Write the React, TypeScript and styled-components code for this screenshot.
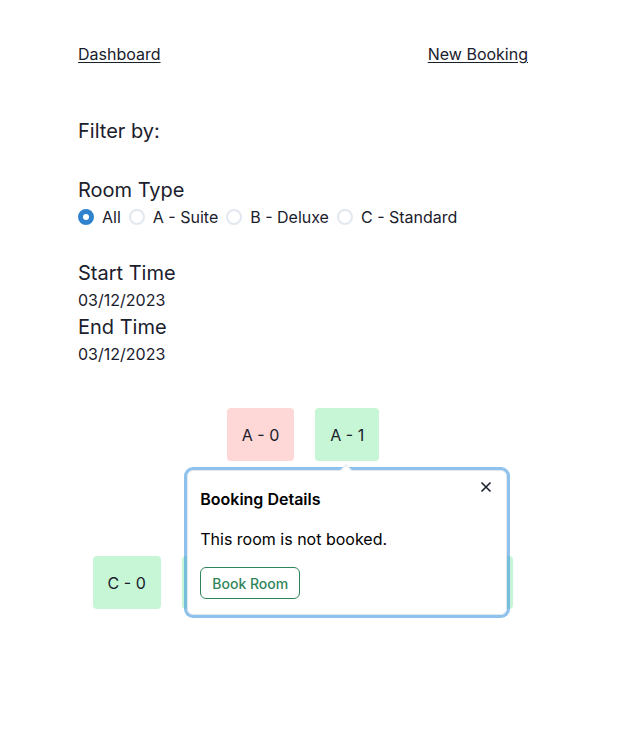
import React from "react";
import styled, { createGlobalStyle } from "styled-components";

const Global = createGlobalStyle`
  html, body { margin: 0; padding: 0; background: #ffffff; }
  body { font-family: Inter, "Noto Sans", sans-serif; color: #1a202c; }
  * { box-sizing: border-box; }
`;

const Page = styled.div`
  width: 450px;
  margin-left: 78px;
  padding-top: 42px;
  padding-bottom: 120px;
`;

const Nav = styled.nav`
  display: flex;
  justify-content: space-between;
`;

const NavLink = styled.a`
  font-size: 16px;
  line-height: 24px;
  color: #1a202c;
  text-decoration: underline;
  text-underline-offset: 2px;
  cursor: pointer;
`;

const Heading = styled.div<{ $mt?: number }>`
  font-size: 20px;
  line-height: 30px;
  margin-top: ${(p) => p.$mt ?? 0}px;
`;

const Value = styled.div`
  font-size: 16px;
  line-height: 24px;
`;

const RadioGroup = styled.div`
  display: flex;
  align-items: center;
  gap: 8px;
`;

const RadioLabel = styled.label`
  display: flex;
  align-items: center;
  gap: 8px;
  font-size: 16px;
  line-height: 24px;
  cursor: pointer;
`;

const RadioCircle = styled.span<{ $checked?: boolean }>`
  width: 16px;
  height: 16px;
  border-radius: 50%;
  border: 2px solid ${(p) => (p.$checked ? "#3182ce" : "#e2e8f0")};
  background: ${(p) => (p.$checked ? "#3182ce" : "#ffffff")};
  display: flex;
  align-items: center;
  justify-content: center;
  &::after {
    content: "";
    display: ${(p) => (p.$checked ? "block" : "none")};
    width: 6px;
    height: 6px;
    border-radius: 50%;
    background: #ffffff;
  }
`;

const Rooms = styled.div`
  margin-top: 42px;
  display: flex;
  flex-direction: column;
  gap: 95px;
`;

const RoomRow = styled.div`
  display: flex;
  justify-content: center;
  gap: 21px;
`;

const RoomWrap = styled.div`
  position: relative;
`;

const RoomBox = styled.div<{ $booked?: boolean }>`
  background: ${(p) => (p.$booked ? "#fed7d7" : "#c6f6d5")};
  border-radius: 4px;
  padding: 14.5px 15px;
  font-size: 16px;
  line-height: 24px;
  color: #1a202c;
  cursor: pointer;
`;

const Popover = styled.div`
  position: absolute;
  top: calc(100% + 9px);
  left: 50%;
  transform: translateX(-50%);
  width: 320px;
  background: #ffffff;
  border: 1px solid #e2e8f0;
  border-radius: 6px;
  box-shadow: 0 0 0 3px rgba(66, 153, 225, 0.6);
  padding: 16px 12px 15px;
  z-index: 10;
`;

const Arrow = styled.div`
  position: absolute;
  top: -5px;
  left: 50%;
  width: 8px;
  height: 8px;
  margin-left: -5px;
  background: #ffffff;
  border-top: 1px solid #e2e8f0;
  border-left: 1px solid #e2e8f0;
  transform: rotate(45deg);
  z-index: 11;
`;

const CloseButton = styled.button`
  position: absolute;
  top: 4px;
  right: 8px;
  width: 24px;
  height: 24px;
  border: none;
  background: transparent;
  padding: 0;
  display: flex;
  align-items: center;
  justify-content: center;
  cursor: pointer;
  color: #1a202c;
`;

const PopHeader = styled.div`
  font-size: 16px;
  line-height: 24px;
  font-weight: 600;
  color: #000000;
`;

const PopBody = styled.div`
  margin-top: 16px;
  font-size: 16px;
  line-height: 24px;
  color: #000000;
`;

const BookButton = styled.button`
  margin-top: 16px;
  height: 32px;
  width: 100px;
  padding: 0;
  border: 1px solid #2f855a;
  border-radius: 6px;
  background: #ffffff;
  color: #2f855a;
  font-family: Inter, "Noto Sans", sans-serif;
  font-size: 14px;
  font-weight: 500;
  cursor: pointer;
`;

const options = ["All", "A - Suite", "B - Deluxe", "C - Standard"];

export default function App() {
  return (
    <>
      <Global />
      <Page>
        <Nav>
          <NavLink>Dashboard</NavLink>
          <NavLink>New Booking</NavLink>
        </Nav>
        <Heading $mt={50}>Filter by:</Heading>
        <Heading $mt={29}>Room Type</Heading>
        <RadioGroup>
          {options.map((o, i) => (
            <RadioLabel key={o}>
              <RadioCircle $checked={i === 0} />
              {o}
            </RadioLabel>
          ))}
        </RadioGroup>
        <Heading $mt={29}>Start Time</Heading>
        <Value>03/12/2023</Value>
        <Heading>End Time</Heading>
        <Value>03/12/2023</Value>
        <Rooms>
          <RoomRow>
            <RoomWrap>
              <RoomBox $booked>A - 0</RoomBox>
            </RoomWrap>
            <RoomWrap>
              <RoomBox>A - 1</RoomBox>
              <Popover>
                <Arrow />
                <CloseButton aria-label="Close">
                  <svg width="12" height="12" viewBox="0 0 12 12">
                    <path d="M1.5 1.5 L10.5 10.5 M10.5 1.5 L1.5 10.5" stroke="#1a202c" strokeWidth="1.6" fill="none" />
                  </svg>
                </CloseButton>
                <PopHeader>Booking Details</PopHeader>
                <PopBody>This room is not booked.</PopBody>
                <BookButton>Book Room</BookButton>
              </Popover>
            </RoomWrap>
          </RoomRow>
          <RoomRow>
            {["C - 0", "C - 1", "C - 2", "C - 3", "C - 4"].map((r) => (
              <RoomWrap key={r}>
                <RoomBox>{r}</RoomBox>
              </RoomWrap>
            ))}
          </RoomRow>
        </Rooms>
      </Page>
    </>
  );
}
